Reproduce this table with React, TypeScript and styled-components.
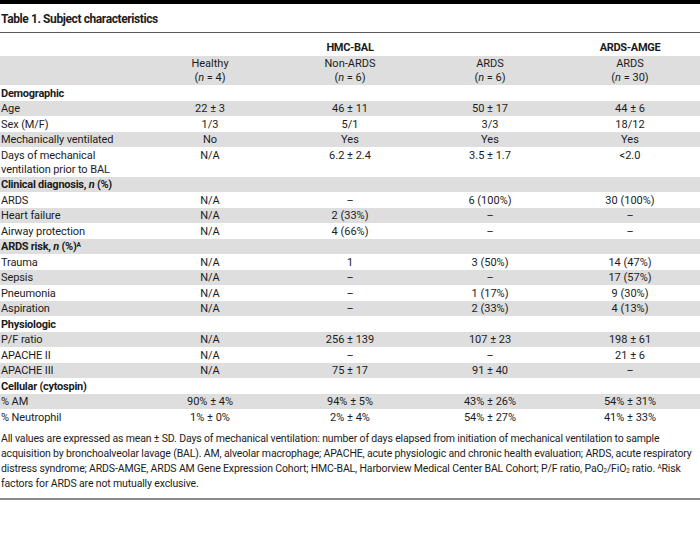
import * as React from 'react'
import styled, { createGlobalStyle } from 'styled-components'

const GlobalStyle = createGlobalStyle`
  html, body {
    margin: 0;
    padding: 0;
    background: #fff;
  }
  body {
    font-family: "Roboto", "Liberation Sans", sans-serif;
    color: #1c1c1c;
  }
`

const Wrap = styled.div`
  width: 700px;
  border-top: 4px solid #000;
`

const Title = styled.h3`
  margin: 0;
  padding: 5px 1px 0;
  height: 23px;
  font-size: 12px;
  letter-spacing: -0.4px;
  line-height: 20px;
  font-weight: 700;
  border-bottom: 1px solid #5a5a5a;
`

const Table = styled.table`
  width: 700px;
  border-collapse: collapse;
  table-layout: fixed;
  font-size: 11px;
`

const Col = styled.col`
  width: 140px;
`

const GroupRow = styled.tr`
  height: 23px;
`

const GroupCell = styled.th`
  padding: 8px 0 0;
  font-weight: 700;
  letter-spacing: -0.3px;
  text-align: center;
  line-height: 14px;
  vertical-align: top;
`

const HeadRow = styled.tr`
  background: #dedede;
`

const HeadCell = styled.th`
  padding: 0;
  height: 29px;
  font-weight: 400;
  text-align: center;
  line-height: 14px;
`

const Row = styled.tr<{ $shade?: boolean }>`
  background: ${p => (p.$shade ? '#dedede' : '#fff')};
`

const Label = styled.td<{ $section?: boolean }>`
  padding: 1.5px 0 0 1px;
  line-height: 14px;
  font-weight: ${p => (p.$section ? 700 : 400)};
  letter-spacing: ${p => (p.$section ? '-0.25px' : '-0.1px')};
  vertical-align: top;
  white-space: nowrap;
`

const Value = styled.td`
  padding: 1.5px 0 0;
  line-height: 14px;
  text-align: center;
  vertical-align: top;
`

const Footnote = styled.p`
  margin: 0;
  padding: 6px 1px 6px;
  font-size: 10.5px;
  letter-spacing: -0.15px;
  line-height: 15.3px;
  border-bottom: 2px solid #8a8a8a;
`

const Sup = styled.span`
  font-size: 0.6em;
  line-height: 0;
  vertical-align: 0.45em;
`

const Sub = styled.span`
  font-size: 0.6em;
  line-height: 0;
  vertical-align: -0.2em;
`

type DataRow = { label: React.ReactNode; values?: string[]; section?: boolean }

const rows: DataRow[] = [
  { label: 'Demographic', section: true },
  { label: 'Age', values: ['22 ± 3', '46 ± 11', '50 ± 17', '44 ± 6'] },
  { label: 'Sex (M/F)', values: ['1/3', '5/1', '3/3', '18/12'] },
  { label: 'Mechanically ventilated', values: ['No', 'Yes', 'Yes', 'Yes'] },
  {
    label: (
      <>
        Days of mechanical
        <br />
        ventilation prior to BAL
      </>
    ),
    values: ['N/A', '6.2 ± 2.4', '3.5 ± 1.7', '<2.0'],
  },
  {
    label: (
      <>
        Clinical diagnosis, <i>n</i> (%)
      </>
    ),
    section: true,
  },
  { label: 'ARDS', values: ['N/A', '–', '6 (100%)', '30 (100%)'] },
  { label: 'Heart failure', values: ['N/A', '2 (33%)', '–', '–'] },
  { label: 'Airway protection', values: ['N/A', '4 (66%)', '–', '–'] },
  {
    label: (
      <>
        ARDS risk, <i>n</i> (%)<Sup>A</Sup>
      </>
    ),
    section: true,
  },
  { label: 'Trauma', values: ['N/A', '1', '3 (50%)', '14 (47%)'] },
  { label: 'Sepsis', values: ['N/A', '–', '–', '17 (57%)'] },
  { label: 'Pneumonia', values: ['N/A', '–', '1 (17%)', '9 (30%)'] },
  { label: 'Aspiration', values: ['N/A', '–', '2 (33%)', '4 (13%)'] },
  { label: 'Physiologic', section: true },
  { label: 'P/F ratio', values: ['N/A', '256 ± 139', '107 ± 23', '198 ± 61'] },
  { label: 'APACHE II', values: ['N/A', '–', '–', '21 ± 6'] },
  { label: 'APACHE III', values: ['N/A', '75 ± 17', '91 ± 40', '–'] },
  { label: 'Cellular (cytospin)', section: true },
  { label: '% AM', values: ['90% ± 4%', '94% ± 5%', '43% ± 26%', '54% ± 31%'] },
  { label: '% Neutrophil', values: ['1% ± 0%', '2% ± 4%', '54% ± 27%', '41% ± 33%'] },
]

export default function App() {
  return (
    <Wrap>
      <GlobalStyle />
      <Title>Table 1. Subject characteristics</Title>
      <Table>
        <colgroup>
          <Col />
          <Col />
          <Col />
          <Col />
          <Col />
        </colgroup>
        <thead>
          <GroupRow>
            <GroupCell />
            <GroupCell />
            <GroupCell>HMC-BAL</GroupCell>
            <GroupCell />
            <GroupCell>ARDS-AMGE</GroupCell>
          </GroupRow>
          <HeadRow>
            <HeadCell />
            <HeadCell>
              Healthy
              <br />(<i>n</i> = 4)
            </HeadCell>
            <HeadCell>
              Non-ARDS
              <br />(<i>n</i> = 6)
            </HeadCell>
            <HeadCell>
              ARDS
              <br />(<i>n</i> = 6)
            </HeadCell>
            <HeadCell>
              ARDS
              <br />(<i>n</i> = 30)
            </HeadCell>
          </HeadRow>
        </thead>
        <tbody>
          {rows.map((r, i) => (
            <Row key={i} $shade={i % 2 === 1}>
              <Label $section={r.section}>{r.label}</Label>
              {(r.values ?? ['', '', '', '']).map((v, j) => (
                <Value key={j}>{v}</Value>
              ))}
            </Row>
          ))}
        </tbody>
      </Table>
      <Footnote>
        All values are expressed as mean ± SD. Days of mechanical ventilation: number of days
        elapsed from initiation of mechanical ventilation to sample acquisition by
        bronchoalveolar lavage (BAL). AM, alveolar macrophage; APACHE, acute physiologic and
        chronic health evaluation; ARDS, acute respiratory distress syndrome; ARDS-AMGE, ARDS AM
        Gene Expression Cohort; HMC-BAL, Harborview Medical Center BAL Cohort; P/F ratio,
        PaO<Sub>2</Sub>/FiO<Sub>2</Sub> ratio. <Sup>A</Sup>Risk factors for ARDS are not mutually
        exclusive.
      </Footnote>
    </Wrap>
  )
}
